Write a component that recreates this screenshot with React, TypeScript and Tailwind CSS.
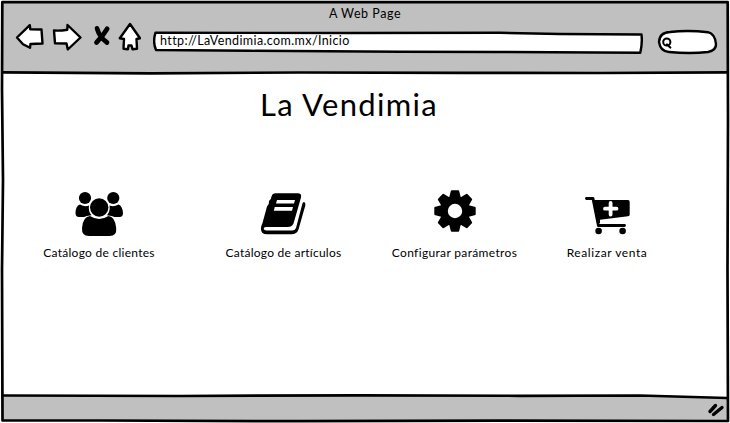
import type { ReactNode } from "react";

const ink = { fill: "none", stroke: "#000", strokeLinejoin: "round", strokeLinecap: "round" } as const;

function ClientsIcon() {
  return (
    <svg width="48" height="46" viewBox="75 191 48 46" className="block">
      <circle cx="85" cy="198" r="6.1" />
      <circle cx="113.3" cy="198" r="6.1" />
      <path d="M80 204.5Q85 207.5 89 205.5Q88 211 91.5 215.3Q86 216 84 217H79Q75.5 217 75.5 213Q75.5 206 80 204.5Z" />
      <path d="M118.5 204.5Q113.5 207.5 109.5 205.5Q110.5 211 107 215.3Q112.5 216 114.5 217H119.5Q123 217 123 213Q122.5 206 118.5 204.5Z" />
      <circle cx="99.2" cy="207.5" r="9.2" />
      <path d="M90 216Q99 222 108.5 216Q115 216.5 116.2 228Q117 236 109.5 236H89Q81.500 236 82 228Q83 216.500 90 216Z" />
    </svg>
  );
}

function BookIcon() {
  return (
    <svg width="46" height="44" viewBox="260 192 46 44" className="block">
      <path d="M275.500 193.200H297.500Q302 193.200 301 197.500L293.500 223.500Q292 227 287.500 227H266Q263.500 227 263.700 228.800Q264 230.600 266.500 230.600H292Q295 230.600 296 228L302.300 204Q303 201.500 304.300 202Q306 203 305.300 205.500L298.500 229.500Q296.800 234.300 291.500 234.300H267Q261 234.300 260.900 229Q260.900 226 262.500 223L267 206.500Q269.500 204 269 201Q271.500 199 271.500 196.500Q272.500 193.200 275.500 193.200Z" />
      <path d="M277 200H295L294 203.500H276ZM274.800 207H293L292 210.700H273.800Z" fill="#fff" />
    </svg>
  );
}

function GearIcon() {
  return (
    <svg width="42" height="42" viewBox="-21 -21 42 42" className="block">
      {[0, 45, 90, 135, 180, 225, 270, 315].map((angle) => (
        <path key={angle} d="M-6.200 -12L-4.300 -19.500Q-4.100 -20.700 -3.200 -20.700H3.200Q4.100 -20.700 4.300 -19.500L6.200 -12Z" transform={`rotate(${angle})`} />
      ))}
      <path fillRule="evenodd" d="M0 -15A15 15 0 1 0 0 15A15 15 0 1 0 0 -15ZM0 -7.200A7.200 7.200 0 1 1 0 7.200A7.200 7.200 0 1 1 0 -7.200Z" />
    </svg>
  );
}

function CartIcon() {
  return (
    <svg width="46" height="40" viewBox="584 196 46 40" className="block">
      <path d="M586.500 198.500H593L598.400 225.500H624.500" {...ink} strokeWidth="2.900" />
      <path d="M594 200H628Q629.700 200 629.700 202V214.500Q629.700 216 628 216.300L600 219.800V223H597Z" />
      <path d="M610.600 203V214.500M605 208.700H616.500" {...ink} stroke="#fff" strokeWidth="3.800" />
      <circle cx="598.600" cy="231" r="3.300" />
      <circle cx="622.600" cy="231" r="3.300" />
    </svg>
  );
}

function MenuItem({ icon, label, labelClass, iconClass }: { icon: ReactNode; label: string; labelClass: string; iconClass: string }) {
  return (
    <button className="flex flex-col items-center whitespace-nowrap">
      <span className={`flex h-[47px] ${iconClass}`}>{icon}</span>
      <span className={`mt-[7px] text-[12px] leading-[18px] ${labelClass}`}>{label}</span>
    </button>
  );
}

function Frame() {
  return (
    <svg width="730" height="423" className="pointer-events-none absolute inset-0">
      <g {...ink} strokeWidth="2.700">
        <path d="M2.300 2.200H727.700L728 120L727.500 270L728 421L500 420.700L300 421.200L100 420.500L2.500 420.500L2 270L3 180L2 90Z" />
        <path d="M3 72.300L150 73.300L300 72.500L460 72.800L600 73L727 72.300" />
        <path d="M3 395.500L180 396L360 395.300L520 395.800L640 395.500L727 398" />
      </g>
    </svg>
  );
}

function NavIcons() {
  return (
    <svg width="126" height="30" viewBox="15 22 126 30" className="block">
      <g {...ink} fill="#fff" strokeWidth="2.400">
        <path d="M17 37.500L29.800 25.200L30.300 29.300L41.500 29.500L42.500 43.500L30.500 44L30 47.800L23 44.200Z" />
        <path d="M54 30.500Q60 31 67.300 29.700L67.500 25L80.500 37.500L67.800 49.500L66.500 43.500L55 43.300Z" />
        <path d="M130 24L119.800 38.300L124 39L123.500 48.700L128 49.200L128.500 45.500L131.500 45.500L132.500 49.200L137 48.700L136.500 39L140 38.300Z" />
      </g>
      <path d="M97 28.300Q99.500 37 107 42.500M107.200 28.800Q103 36 96.500 42.500" {...ink} strokeWidth="4.700" />
    </svg>
  );
}

export default function App() {
  return (
    <div className="relative flex h-[423px] w-[730px] flex-col overflow-hidden bg-white pt-px pr-[2px] pb-[2px] pl-[2px] font-['Lato','Open_Sans',sans-serif] text-black">
      <header className="h-[72px] bg-[#c0c0c0]">
        <div className="h-[23px] pt-[3px] text-center text-[12.500px] leading-[19px] tracking-[0.550px]">A Web Page</div>
        <div className="flex h-[36px] items-center">
          <div className="ml-[13px] -mt-[10px]"><NavIcons /></div>
          <div className="relative ml-[12px] h-[24px] w-[490px]">
            <svg width="490" height="24" viewBox="153 29 490 24" className="absolute inset-0">
              <path d="M155.500 31.700L350 32L500 31.800L560 33L641.500 33.500Q642.500 42 640.300 51.700L500 51L400 50.700L250 49.800L156 49Q152.500 41 155.500 31.700Z" {...ink} fill="#fff" strokeWidth="2.400" />
            </svg>
            <span className="relative block pl-[7px] pt-px text-[12.500px] leading-[19px] tracking-[0.390px]">http://LaVendimia.com.mx/Inicio</span>
          </div>
          <svg width="62" height="28" viewBox="656 27 62 28" className="ml-[13px] block">
            <path d="M659 41Q659.500 31.500 670 31Q688 29 708 31.200Q715 33 716 43Q716.500 49 708 51Q690 53 669 51Q660.500 50.500 659 41Z" {...ink} fill="#fff" strokeWidth="2.400" />
            <circle cx="666.800" cy="41" r="3.600" {...ink} strokeWidth="2" />
            <path d="M667 43.500L670.300 46.500" {...ink} strokeWidth="2.200" />
          </svg>
        </div>
      </header>
      <main className="h-[323px]">
        <h1 className="pl-[258px] pt-[10px] text-[31px] leading-[42px] tracking-[1.300px]">La Vendimia</h1>
        <nav className="mt-[65px] flex">
          <div className="flex w-[194px] justify-center"><MenuItem icon={<ClientsIcon />} iconClass="items-end" label="Catálogo de clientes" labelClass="tracking-[0.270px]" /></div>
          <div className="flex w-[175px] justify-center"><MenuItem icon={<BookIcon />} iconClass="items-end pb-px" label="Catálogo de artículos" labelClass="tracking-[0.250px]" /></div>
          <div className="flex w-[167px] justify-center"><MenuItem icon={<GearIcon />} iconClass="items-start" label="Configurar parámetros" labelClass="tracking-[0.340px]" /></div>
          <div className="flex w-[138px] justify-center"><MenuItem icon={<CartIcon />} iconClass="items-end pb-px" label="Realizar venta" labelClass="tracking-[0.570px]" /></div>
        </nav>
      </main>
      <footer className="flex h-[25px] items-start justify-end bg-[#c0c0c0] [clip-path:polygon(0_0,88%_0,100%_2px,100%_100%,0_100%)]">
        <svg width="20" height="18" viewBox="706 402 20 18" className="mt-[6px] mr-[2px] block">
          <path d="M715.500 405.500L710 411.500M722 407.500L713.500 414.500" {...ink} strokeWidth="3.400" />
        </svg>
      </footer>
      <Frame />
    </div>
  );
}
